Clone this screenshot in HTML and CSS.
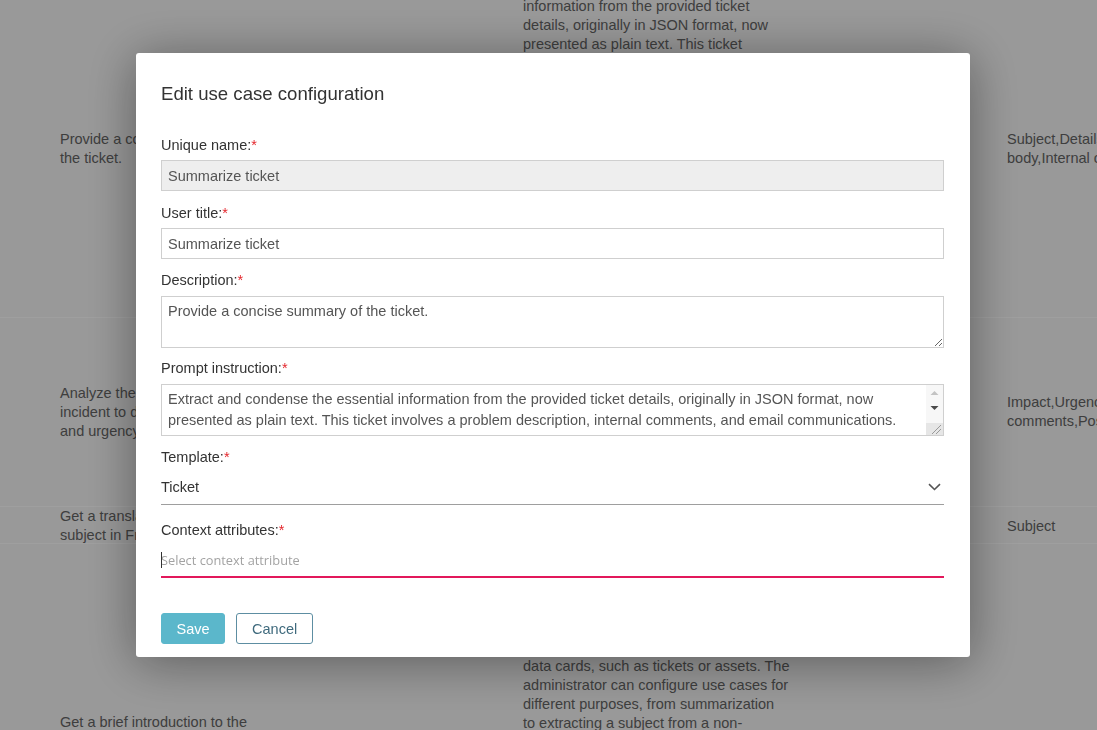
FILE: index.html
```html
<!DOCTYPE html>
<html lang="en">
<head>
<meta charset="utf-8">
<title>Edit use case configuration</title>
<link rel="stylesheet" href="styles.css">
</head>
<body>
<div class="page">
  <div class="row row-1">
    <div class="cell c1">Provide a concise summary of<br>the ticket.</div>
    <div class="cell c2">Extract and condense the essential<br>information from the provided ticket<br>details, originally in JSON format, now<br>presented as plain text. This ticket<br>involves a problem description, internal<br>comments, and email communications.<br>Focus on the key facts, the current<br>status and the next steps that are<br>required to resolve the ticket.</div>
    <div class="cell c3">Subject,Details,Email<br>body,Internal comments</div>
  </div>
  <div class="row row-2">
    <div class="cell c1">Analyze the description of the<br>incident to determine impact<br>and urgency.</div>
    <div class="cell c2">Analyze the ticket details and the<br>internal comments. Rate the impact<br>and the urgency of the incident.</div>
    <div class="cell c3">Impact,Urgency,Details,Internal<br>comments,Possible solutions</div>
  </div>
  <div class="row row-3">
    <div class="cell c1">Get a translation of the ticket<br>subject in French.</div>
    <div class="cell c2">Translate the subject into French.</div>
    <div class="cell c3">Subject</div>
  </div>
  <div class="row row-4">
    <div class="cell c1">Get a brief introduction to the<br>ticket for new agents.</div>
    <div class="cell c2">Use cases define how the AI assistant<br>supports agents in their daily work.<br>Each use case combines a prompt<br>instruction with selected attributes of<br>the record and can be applied to<br>data cards, such as tickets or assets. The<br>administrator can configure use cases for<br>different purposes, from summarization<br>to extracting a subject from a non-<br>structured email text.</div>
    <div class="cell c3"></div>
  </div>
</div>

<div class="overlay">
  <div class="modal" role="dialog" aria-labelledby="modal-title">
    <h2 class="modal-title" id="modal-title">Edit use case configuration</h2>

    <div class="field field-first">
      <label class="field-label">Unique name:<span class="req">*</span></label>
      <input class="text-input is-readonly" type="text" value="Summarize ticket" readonly>
    </div>

    <div class="field">
      <label class="field-label">User title:<span class="req">*</span></label>
      <input class="text-input" type="text" value="Summarize ticket">
    </div>

    <div class="field field-desc">
      <label class="field-label field-label-area">Description:<span class="req">*</span></label>
      <textarea class="textarea">Provide a concise summary of the ticket.</textarea>
    </div>

    <div class="field">
      <label class="field-label field-label-area">Prompt instruction:<span class="req">*</span></label>
      <div class="prompt-wrap">
        <textarea class="textarea prompt">Extract and condense the essential information from the provided ticket details, originally in JSON format, now presented as plain text. This ticket involves a problem description, internal comments, and email communications. Focus on the key facts and the next steps.</textarea>
        <div class="scrollbar" aria-hidden="true">
          <span class="sb-btn sb-up"><svg width="17" height="16" viewBox="0 0 17 16"><path d="M4.5 10 L12.5 10 L8.5 6 Z" fill="#c3c3c3"/></svg></span>
          <span class="sb-btn sb-down"><svg width="17" height="15" viewBox="0 0 17 15"><path d="M4.5 5 L12.5 5 L8.5 9 Z" fill="#4a4a4a"/></svg></span>
          <span class="sb-track"></span>
          <span class="sb-corner"><svg width="17" height="12" viewBox="0 0 17 12"><path d="M15 2 L6 11 M15 6 L10 11" stroke="#9a9a9a" stroke-width="1"/></svg></span>
        </div>
      </div>
    </div>

    <div class="field field-template">
      <label class="field-label field-label-select">Template:<span class="req">*</span></label>
      <div class="select" role="combobox" aria-expanded="false">
        <span class="select-value">Ticket</span>
        <svg class="chevron" width="13" height="8" viewBox="0 0 13 8"><path d="M1 1.2 L6.5 6.5 L12 1.2" fill="none" stroke="#555" stroke-width="1.6"/></svg>
      </div>
    </div>

    <div class="field field-last">
      <label class="field-label field-label-select">Context attributes:<span class="req">*</span></label>
      <div class="combo">
        <input class="combo-input" type="text" placeholder="Select context attribute">
        <span class="caret"></span>
      </div>
    </div>

    <div class="actions">
      <button class="btn btn-primary" type="button">Save</button>
      <button class="btn btn-secondary" type="button">Cancel</button>
    </div>
  </div>
</div>
</body>
</html>
```
FILE: styles.css
```css
html, body {
  margin: 0;
  padding: 0;
}

body {
  width: 1097px;
  height: 730px;
  overflow: hidden;
  background: #f5f5f5;
  font-family: "Liberation Sans", Arial, sans-serif;
}

/* ---------- background table ---------- */
.page {
  width: 1097px;
  background: #f5f5f5;
}

.row {
  display: grid;
  grid-template-columns: 463px 484px 1fr;
  padding-left: 60px;
  align-items: center;
  box-sizing: border-box;
  border-bottom: 1px solid #ffffff;
  font-size: 14.5px;
  line-height: 19px;
  color: #646464;
  white-space: nowrap;
}

.cell {
  overflow: visible;
}

.row-1 {
  height: 318px;
  padding-bottom: 20px;
}

.row-1 .c2 {
  align-self: start;
  margin-top: -22px;
}

.row-2 {
  height: 189px;
}

.row-3 {
  height: 37px;
}

.row-4 {
  align-items: start;
  border-bottom: 0;
}

.row-4 .c1 {
  margin-top: 169px;
}

.row-4 .c2 {
  margin-top: 18px;
}

/* ---------- overlay & modal ---------- */
.overlay {
  position: fixed;
  inset: 0;
  background: rgba(0, 0, 0, 0.375);
}

.modal {
  width: 834px;
  margin: 53px 0 0 136px;
  box-sizing: border-box;
  padding: 29px 26px 13px 25px;
  background: #ffffff;
  border-radius: 3px;
  box-shadow: 0 5px 50px rgba(0, 0, 0, 0.4);
}

.modal-title {
  margin: 0 0 30px;
  padding-top: 1px;
  font-size: 18.6px;
  line-height: 22px;
  font-weight: normal;
  color: #333333;
}

.field {
  margin-bottom: 11px;
}

.field-first {
  margin-bottom: 12px;
}

.field-desc {
  margin-bottom: 10px;
}

.field-template {
  margin-bottom: 15px;
}

.field-last {
  margin-bottom: 0;
}

.field-label {
  display: block;
  font-size: 14.5px;
  line-height: 20px;
  color: #333333;
  margin-bottom: 5px;
}

.field-label-area {
  margin-bottom: 6px;
}

.field-label-select {
  margin-bottom: 3px;
}

.req {
  color: #e4262c;
}

.text-input {
  display: block;
  width: 100%;
  height: 31px;
  margin: 0;
  box-sizing: border-box;
  padding: 0 6px;
  border: 1px solid #cfcfcf;
  border-radius: 0;
  background: #ffffff;
  font-family: "Liberation Sans", Arial, sans-serif;
  font-size: 14.5px;
  color: #555555;
  outline: none;
}

.text-input.is-readonly {
  background: #eeeeee;
}

.textarea {
  display: block;
  width: 100%;
  height: 52px;
  margin: 0;
  box-sizing: border-box;
  padding: 4px 6px;
  border: 1px solid #cfcfcf;
  border-radius: 0;
  background: #ffffff;
  font-family: "Liberation Sans", Arial, sans-serif;
  font-size: 14.5px;
  line-height: 21px;
  color: #555555;
  outline: none;
}

.prompt-wrap {
  position: relative;
}

.textarea.prompt {
  padding-right: 23px;
  overflow: hidden;
  resize: none;
}

.scrollbar {
  position: absolute;
  top: 1px;
  right: 1px;
  bottom: 1px;
  width: 17px;
  display: flex;
  flex-direction: column;
  background: #f7f7f7;
}

.sb-btn,
.sb-corner {
  display: block;
  line-height: 0;
}

.sb-up {
  height: 16px;
}

.sb-down {
  height: 15px;
}

.sb-track {
  flex: 1;
}

.sb-corner {
  height: 12px;
  background: #e6e6e6;
}

.select {
  display: flex;
  align-items: center;
  justify-content: space-between;
  height: 35px;
  box-sizing: border-box;
  padding-right: 3px;
  border-bottom: 1px solid #9e9e9e;
  font-size: 14.5px;
  color: #333333;
}

.chevron {
  display: block;
}

.combo {
  position: relative;
  height: 35px;
  box-sizing: border-box;
  border-bottom: 2px solid #e2185b;
}

.combo-input {
  display: block;
  width: 100%;
  height: 33px;
  margin: 0;
  padding: 0;
  border: 0;
  outline: none;
  background: transparent;
  font-family: "Open Sans", "Liberation Sans", sans-serif;
  font-size: 12.8px;
  color: #333333;
}

.combo-input::placeholder {
  color: #a3a3a3;
}

.caret {
  position: absolute;
  left: 0;
  top: 9px;
  width: 1px;
  height: 16px;
  background: #333333;
}

.actions {
  display: flex;
  gap: 11px;
  margin-top: 35px;
}

.btn {
  height: 31px;
  box-sizing: border-box;
  margin: 0;
  border: 1px solid;
  border-radius: 3px;
  font-family: "Liberation Sans", Arial, sans-serif;
  font-size: 14.5px;
  cursor: pointer;
}

.btn-primary {
  padding: 0 14.5px;
  background: #5bb7cb;
  border-color: #5bb7cb;
  color: #ffffff;
}

.btn-secondary {
  padding: 0 15px;
  background: #ffffff;
  border-color: #5d8ea2;
  color: #3f6a7d;
}
```
